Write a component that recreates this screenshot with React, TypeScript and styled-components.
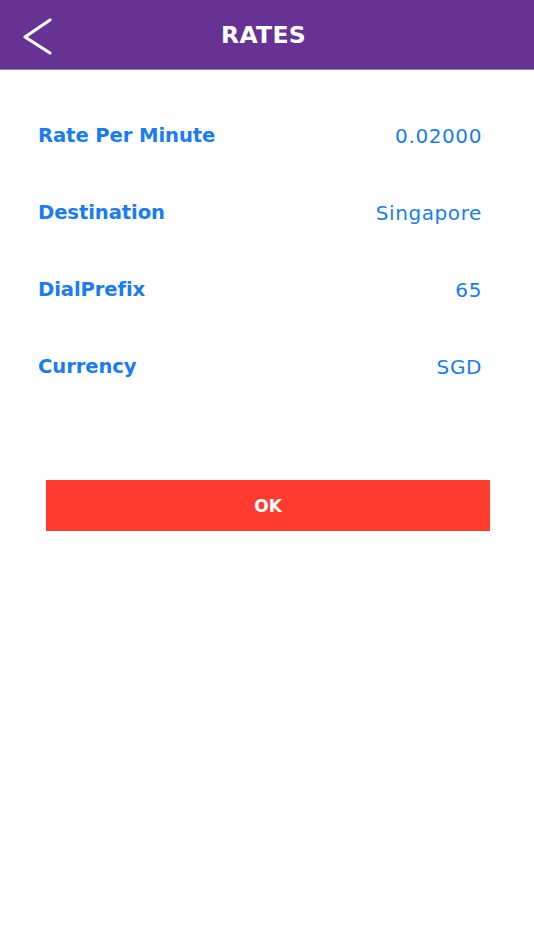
import React from "react";
import styled, { createGlobalStyle } from "styled-components";

const GlobalStyle = createGlobalStyle`
  html, body {
    margin: 0;
    padding: 0;
    background: #ffffff;
    font-family: "DejaVu Sans", "Noto Sans", sans-serif;
  }
`;

const Screen = styled.div`
  width: 534px;
  min-height: 950px;
  background: #ffffff;
`;

const Header = styled.header`
  position: relative;
  height: 69px;
  padding-right: 7px;
  background-color: #663293;
  border-bottom: 1px solid #9b78c0;
  display: flex;
  align-items: center;
  justify-content: center;
`;

const BackButton = styled.button`
  position: absolute;
  left: 20px;
  top: 16px;
  width: 36px;
  height: 40px;
  padding: 0;
  border: none;
  background: transparent;
  cursor: pointer;
`;

const Title = styled.h1`
  margin: 0;
  color: #ffffff;
  font-size: 23.5px;
  font-weight: bold;
  letter-spacing: 0.3px;
`;

const Details = styled.div`
  display: flex;
  flex-direction: column;
  padding: 0 52px 0 38px;
  margin-top: 27px;
`;

const Row = styled.div`
  display: flex;
  justify-content: space-between;
  align-items: center;
  height: 77px;
`;

const Label = styled.span`
  color: #1a7cf2;
  font-size: 19.6px;
  font-weight: bold;
  letter-spacing: -0.1px;
`;

const Value = styled.span`
  color: #1a7cf2;
  font-size: 20px;
  letter-spacing: 0.6px;
`;

const ButtonWrap = styled.div`
  padding: 75px 44px 0 46px;
`;

const OkButton = styled.button`
  width: 100%;
  height: 51px;
  border: none;
  background-color: #ff3b30;
  color: #ffffff;
  font-family: inherit;
  font-size: 17px;
  font-weight: bold;
  cursor: pointer;
`;

const rows = [
  { label: "Rate Per Minute", value: "0.02000" },
  { label: "Destination", value: "Singapore" },
  { label: "DialPrefix", value: "65" },
  { label: "Currency", value: "SGD" },
];

const App: React.FC = () => {
  return (
    <Screen>
      <GlobalStyle />
      <Header>
        <BackButton aria-label="Back">
          <svg width="36" height="40" viewBox="0 0 36 40">
            <polyline
              points="30,4 5,21 30,37"
              fill="none"
              stroke="#ffffff"
              strokeWidth="3.2"
              strokeLinecap="round"
              strokeLinejoin="round"
            />
          </svg>
        </BackButton>
        <Title>RATES</Title>
      </Header>
      <Details>
        {rows.map((r) => (
          <Row key={r.label}>
            <Label>{r.label}</Label>
            <Value>{r.value}</Value>
          </Row>
        ))}
      </Details>
      <ButtonWrap>
        <OkButton>OK</OkButton>
      </ButtonWrap>
    </Screen>
  );
};

export default App;
